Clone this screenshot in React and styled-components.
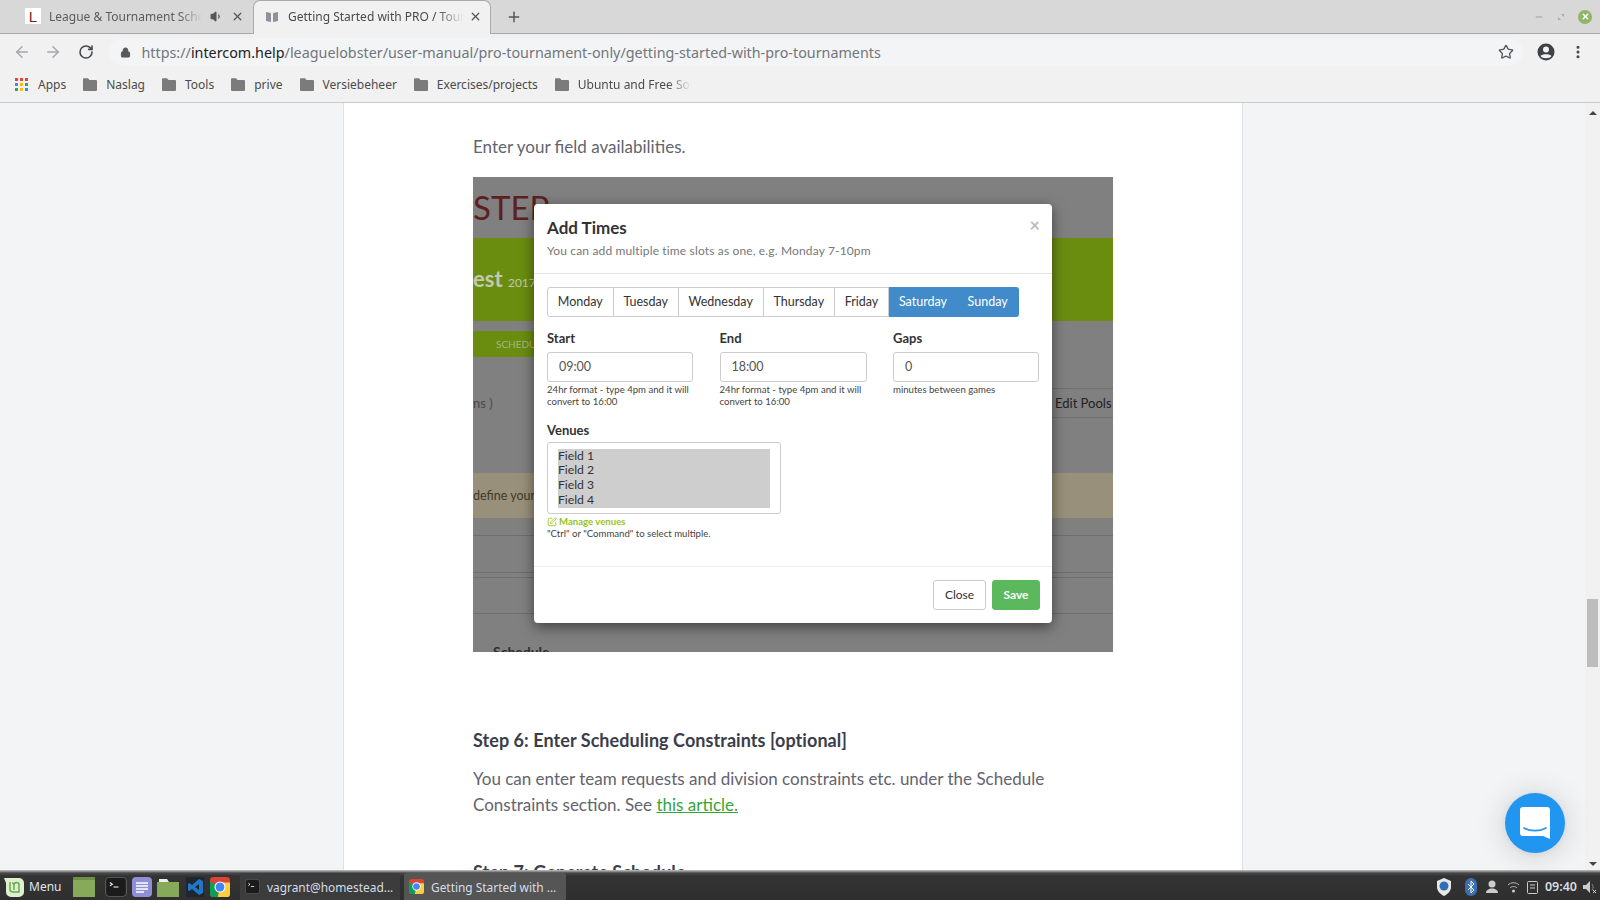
import React from 'react';
import styled, { createGlobalStyle } from 'styled-components';
import { ArrowLeft, ArrowRight, RotateCw, Lock, Star, Plus, X, Volume1, Minus, SquarePen, MoreVertical } from 'lucide-react';

const Global = createGlobalStyle`
  html, body { margin: 0; padding: 0; width: 1600px; height: 900px; overflow: hidden; background: #f3f4f6; }
  * { box-sizing: border-box; }
`;
const Screen = styled.div`display:flex;flex-direction:column;width:1600px;height:900px;overflow:hidden;font-family:"Noto Sans","Open Sans",sans-serif;`;
const TabStrip = styled.div`height:34px;flex:none;background:#d8d8d8;border-bottom:1px solid #a8a8a8;display:flex;align-items:flex-start;position:relative;`;
const Tab = styled.div`width:${p=>p.$w}px;height:34px;flex:none;display:flex;align-items:center;padding:0 0 2px ${p=>p.$pad}px;font-size:12px;color:${p=>p.$active?'#4a4a4a':'#5c5c5c'};
  background:${p=>p.$active?'#f1f1f1':'transparent'};border-radius:${p=>p.$active?'7px 7px 0 0':'0'};
  border:${p=>p.$active?'1px solid #a8a8a8':'none'};border-bottom:none;`;
const TabLabel = styled.span`width:${p=>p.$w}px;overflow:hidden;white-space:nowrap;margin-left:${p=>p.$ml}px;
  -webkit-mask-image:linear-gradient(90deg,#000 85%,transparent);mask-image:linear-gradient(90deg,#000 85%,transparent);`;
const FavL = styled.span`width:16px;height:16px;flex:none;background:#fff;color:#7a1f1f;font:400 15px "Liberation Sans",sans-serif;display:flex;align-items:center;justify-content:center;`;
const NewTab = styled.span`display:flex;margin:9px 0 0 15px;color:#555;`;
const WinControls = styled.div`margin-left:auto;display:flex;align-items:center;gap:13px;height:33px;padding-right:8px;`;
const WinClose = styled.span`width:14px;height:14px;border-radius:50%;background:#8fb56a;display:flex;align-items:center;justify-content:center;color:#fff;`;
const Toolbar = styled.div`height:35px;flex:none;background:#f1f1f1;display:flex;align-items:center;padding:1px 14px 0 13px;color:#5f6368;`;
const NavBtn = styled.span`width:${p=>p.$w||32}px;flex:none;display:flex;align-items:center;color:${p=>p.$dark?'#484b4f':'#a5a7aa'};`;
const Omni = styled.div`flex:1;height:28px;background:#f3f4f6;border-radius:14px;display:flex;align-items:center;padding:0 9px 0 11px;font-size:14.34px;color:#72767b;`;
const Host = styled.span`color:#222;`;
const UrlText = styled.span`margin-left:11px;white-space:nowrap;`;
const OmniStar = styled.span`margin-left:auto;display:flex;color:#55585c;`;
const Account = styled.svg`margin-left:14px;flex:none;`;
const Dots = styled.span`margin-left:15px;display:flex;color:#44474a;`;
const Bookmarks = styled.div`height:34px;flex:none;background:#f1f1f1;border-bottom:1px solid #c9c9c9;display:flex;align-items:center;padding:0 0 3px 15px;font-size:12px;color:#4b4b4b;`;
const Bookmark = styled.span`display:flex;align-items:center;gap:${p=>p.$gap||9}px;margin-right:17px;white-space:nowrap;`;
const Clip = styled.span`width:${p=>p.$w}px;overflow:hidden;-webkit-mask-image:linear-gradient(90deg,#000 80%,transparent);mask-image:linear-gradient(90deg,#000 80%,transparent);`;
const AppsGrid = styled.span`display:grid;grid-template-columns:repeat(3,3px);grid-auto-rows:3px;gap:2px;`;
const AppDot = styled.i`display:block;background:${p=>p.$c};`;
const Viewport = styled.div`flex:1;min-height:0;position:relative;display:flex;background:#f3f4f6;`;
const PageArea = styled.div`flex:1;display:flex;padding-left:343px;overflow:hidden;`;
const Article = styled.article`width:900px;height:1000px;flex:none;background:#fff;border-left:1px solid #dfe1e6;border-right:1px solid #dfe1e6;padding:31px 128px 0 129px;color:#62646f;font-family:"Lato","Noto Sans",sans-serif;`;
const Para = styled.p`margin:0;font-size:17px;line-height:26.5px;`;
const Shot = styled.div`position:relative;width:640px;height:475px;margin-top:16px;background:#808080;overflow:hidden;display:flex;flex-direction:column;font-family:Lato,sans-serif;`;
const ShotTitle = styled.div`height:61px;flex:none;color:#5e1f1f;font-size:33px;padding-top:12px;line-height:36px;`;
const GreenBand = styled.div`height:83px;flex:none;background:#6a8d10;color:#c3c9b0;font-weight:700;font-size:22px;padding-top:26px;line-height:30px;white-space:nowrap;`;
const Small = styled.small`font-size:12px;font-weight:400;`;
const SubTab = styled.div`width:70px;height:26px;flex:none;margin-top:10px;background:#6a8d10;color:#a8b77a;font-size:10px;line-height:26px;padding-left:23px;white-space:nowrap;overflow:hidden;`;
const ToolRow = styled.div`height:30px;flex:none;margin-top:31px;display:flex;justify-content:space-between;align-items:center;color:#3a3a3a;font-size:13px;`;
const Gone = styled.span`color:#4a4a4a;font-size:13px;`;
const EditPools = styled.span`color:#222;border-top:1px solid #6f6f6f;border-bottom:1px solid #6f6f6f;height:30px;line-height:28px;width:61px;padding-left:3px;white-space:nowrap;`;
const Notice = styled.div`height:45px;flex:none;margin-top:55px;background:#98907a;color:#3f3a2c;font-size:12.5px;line-height:45px;`;
const Rule = styled.div`height:1px;flex:none;background:#6e6e6e;margin-top:${p=>p.$mt}px;`;
const CutText = styled.div`flex:none;margin-top:31px;padding-left:20px;font-size:14px;line-height:14px;font-weight:700;color:#2f2f2f;`;
const Modal = styled.div`position:absolute;left:61px;top:27px;width:518px;height:419px;background:#fff;border-radius:4px;box-shadow:0 4px 14px rgba(0,0,0,.5);color:#333;display:flex;flex-direction:column;`;
const ModalHead = styled.header`height:70px;flex:none;border-bottom:1px solid #e5e5e5;padding:13px 12px 0 13px;position:relative;`;
const ModalTitle = styled.h4`margin:0;font-size:17px;line-height:21px;font-weight:700;color:#333;font-family:Lato,sans-serif;`;
const ModalSub = styled.p`margin:5px 0 0;font-size:12px;line-height:16px;color:#777;font-family:Lato,sans-serif;letter-spacing:.15px;`;
const CloseX = styled.span`position:absolute;right:12px;top:11px;color:#bbb;font-size:18px;line-height:20px;font-weight:700;`;
const ModalBody = styled.div`flex:1;padding:13px 12px 0 13px;border-bottom:1px solid #eee;`;
const DayGroup = styled.div`display:inline-flex;height:30px;`;
const Day = styled.span`height:30px;padding:0 9.8px;display:flex;align-items:center;font-size:12.5px;background:${p=>p.$on?'#428bca':'#fff'};color:${p=>p.$on?'#fff':'#333'};
  border:1px solid ${p=>p.$on?'#428bca':'#ccc'};border-left-width:${p=>p.$first?1:0}px;border-radius:${p=>p.$first?'3px 0 0 3px':p.$last?'0 3px 3px 0':'0'};`;
const Fields = styled.div`display:grid;grid-template-columns:146px 147px 146px;column-gap:26.5px;margin-top:13px;`;
const Label = styled.label`display:block;font-size:13px;line-height:16px;font-weight:700;color:#333;`;
const FieldBox = styled.div`height:30px;margin-top:6px;border:1px solid #ccc;border-radius:3px;font-size:12.5px;line-height:28px;padding-left:11px;color:#555;`;
const Help = styled.div`margin-top:${p=>p.$mt??2}px;font-size:9.6px;line-height:12px;color:#444;`;
const VenueBlock = styled.div`margin-top:14px;`;
const VenueBox = styled.div`width:234px;height:72px;margin-top:4px;border:1px solid #ccc;border-radius:3px;padding:6px 10px 5px;`;
const VenueList = styled.div`background:#cecece;height:59px;font-size:12.2px;line-height:14.7px;color:#333;`;
const Manage = styled.div`margin-top:2px;font-size:9.6px;line-height:12px;font-weight:700;color:#97c41e;display:flex;align-items:center;gap:2px;`;
const ModalFoot = styled.footer`height:56px;flex:none;display:flex;justify-content:flex-end;align-items:flex-start;padding:13px 12px 0 0;gap:6px;`;
const Btn = styled.span`height:30px;width:${p=>p.$w}px;border-radius:3px;font-size:12px;display:flex;align-items:center;justify-content:center;background:${p=>p.$save?'#5cb85c':'#fff'};color:${p=>p.$save?'#fff':'#333'};border:1px solid ${p=>p.$save?'#5cb85c':'#ccc'};font-weight:${p=>p.$save?700:400};`;
const Heading = styled.h3`margin:75px 0 0;font-size:18px;line-height:26px;font-weight:700;color:#3b3d4a;letter-spacing:.06px;font-family:Lato,sans-serif;`;
const Para2 = styled(Para)`margin-top:13px;`;
const ArticleLink = styled.a`color:#37a437;text-decoration:underline;`;
const Heading2 = styled(Heading)`margin-top:40px;`;
const ScrollBar = styled.div`width:15px;flex:none;background:#f1f1f1;display:flex;flex-direction:column;align-items:center;position:relative;padding-top:8px;`;
const ArrowUp = styled.i`width:0;height:0;border:4px solid transparent;border-top:0;border-bottom:4px solid #444;`;
const ArrowDown = styled.i`width:0;height:0;border:4px solid transparent;border-bottom:0;border-top:4px solid #444;position:absolute;bottom:4px;`;
const Thumb = styled.div`position:absolute;left:2px;right:2px;top:496px;height:68px;background:#bdbdbd;`;
const Launcher = styled.div`position:absolute;right:35px;bottom:17px;width:60px;height:60px;border-radius:50%;background:#2196f0;box-shadow:0 1px 6px rgba(0,0,0,.06),0 2px 32px rgba(0,0,0,.16);display:flex;align-items:center;justify-content:center;`;
const Taskbar = styled.div`height:30px;flex:none;position:relative;padding-top:3px;background:linear-gradient(#c4c4c4 0,#8a8a8a 1.500px,#484848 3px,#333 6px,#2f2f2f);display:flex;align-items:center;color:#d8d8d8;font-size:12px;`;
const MenuBtn = styled.div`display:flex;align-items:center;gap:5px;padding-left:4px;width:73px;flex:none;color:#dfe6ee;`;
const Launchers = styled.div`display:flex;align-items:center;`;
const LaunchIcon = styled.span`display:flex;margin-left:${p=>p.$ml||0}px;`;
const Gap = styled.span`width:${p=>p.$w}px;flex:none;`;
const WinBtn = styled.div`width:${p=>p.$w}px;height:27px;margin-right:4px;display:flex;align-items:center;gap:7px;padding-left:5px;white-space:nowrap;border-radius:2px 2px 0 0;color:#d6dde6;font-size:11.9px;background:${p=>p.$on?'#555':'#3c3c3c'};`;
const Tray = styled.div`margin-left:auto;display:flex;align-items:center;padding-right:3px;`;
const TrayItem = styled.span`display:flex;align-items:center;margin-left:${p=>p.$ml||0}px;`;
const Clock = styled.span`color:#d8dde2;font-size:12.5px;font-weight:600;`;

const Term = ({w=18,h=18}) => <svg width={w} height={h} viewBox="0 0 18 18" preserveAspectRatio="none"><rect x=".5" y=".5" width="17" height="17" rx="3" fill="#1b1b1b" stroke="#555"/><path d="M4 5l2 1.500L4 8" stroke="#eee" fill="none"/><path d="M7 9h4" stroke="#eee"/></svg>;
const Chrome = ({s=18}) => <svg width={s} height={s} viewBox="0 0 18 18"><rect width="18" height="18" rx="3" fill="#db4437"/><path d="M0 4l9 5-2 9H3a3 3 0 0 1-3-3z" fill="#0f9d58"/><path d="M9 9l-2 9h8a3 3 0 0 0 3-3V5H9z" fill="#ffcd40"/><circle cx="9" cy="9" r="5" fill="#fff"/><circle cx="9" cy="9" r="4" fill="#4285f4"/></svg>;
const BmFolder = () => <svg width="14" height="13" viewBox="0 0 14 13"><path d="M0 1.200A1 1 0 0 1 1 .2h4L6.500 2H13a1 1 0 0 1 1 1v9a1 1 0 0 1-1 1H1a1 1 0 0 1-1-1z" fill="#7b7b7b"/></svg>;

const days = ['Monday','Tuesday','Wednesday','Thursday','Friday'];
const marks = ['Naslag','Tools','prive','Versiebeheer','Exercises/projects'];
const dotColors = ['#ea4335','#ea4335','#ea4335','#4285f4','#fbbc05','#34a853','#34a853','#fbbc05','#4285f4'];

export default function App(){
  return <Screen>
    <Global/>
    <TabStrip>
      <Tab $w={253} $pad={25}>
        <FavL>L</FavL>
        <TabLabel $w={153} $ml={8}>League &amp; Tournament Schedule Maker</TabLabel>
        <Gap $w={8}/><Volume1 size={13} color="#555" fill="#555"/><Gap $w={8}/><X size={13} color="#555" strokeWidth={2.4}/>
      </Tab>
      <Tab $active $w={238} $pad={11}>
        <svg width="14" height="14" viewBox="0 0 14 14"><path d="M1 2l5 1v9l-5-1zM13 2L8 3v9l5-1z" fill="#8b9299"/></svg>
        <TabLabel $w={176} $ml={9}>Getting Started with PRO / Tournaments</TabLabel>
        <Gap $w={5}/><X size={13} color="#555" strokeWidth={2.4}/>
      </Tab>
      <NewTab><Plus size={16} strokeWidth={2.2}/></NewTab>
      <WinControls>
        <Minus size={10} color="#999"/>
        <svg width="8" height="8" viewBox="0 0 8 8"><path d="M4 1h3v3zM1 4v3h3z" fill="#aaa"/></svg>
        <WinClose><X size={9} strokeWidth={4}/></WinClose>
      </WinControls>
    </TabStrip>
    <Toolbar>
      <NavBtn $w={30.5}><ArrowLeft size={18}/></NavBtn>
      <NavBtn $w={34}><ArrowRight size={18}/></NavBtn>
      <NavBtn $w={31} $dark><RotateCw size={16} strokeWidth={2.4}/></NavBtn>
      <Omni>
        <Lock size={11} fill="#55585c" color="#55585c"/>
        <UrlText>https://<Host>intercom.help</Host>/leaguelobster/user-manual/pro-tournament-only/getting-started-with-pro-tournaments</UrlText>
        <OmniStar><Star size={16}/></OmniStar>
      </Omni>
      <Account width="18" height="18" viewBox="0 0 18 18"><circle cx="9" cy="9" r="8.500" fill="#3f4144"/><circle cx="9" cy="6.500" r="3" fill="#f1f1f1"/><path d="M3.500 13c1.500-2.400 9.500-2.400 11 0-2 3-9 3-11 0z" fill="#f1f1f1"/></Account>
      <Dots><MoreVertical size={16} strokeWidth={2.6}/></Dots>
    </Toolbar>
    <Bookmarks>
      <Bookmark $gap={10}>
        <AppsGrid>{dotColors.map((c,i)=><AppDot key={i} $c={c}/>)}</AppsGrid>
        <span>Apps</span>
      </Bookmark>
      {marks.map(m=><Bookmark key={m}><BmFolder/><span>{m}</span></Bookmark>)}
      <Bookmark><BmFolder/><Clip $w={113}>Ubuntu and Free Software</Clip></Bookmark>
    </Bookmarks>
    <Viewport>
      <PageArea>
        <Article>
          <Para>Enter your field availabilities.</Para>
          <Shot>
            <ShotTitle>STEP</ShotTitle>
            <GreenBand>est <Small>2017</Small></GreenBand>
            <SubTab>SCHEDULE</SubTab>
            <ToolRow><Gone>ns )</Gone><EditPools>Edit Pools</EditPools></ToolRow>
            <Notice>define your</Notice>
            <Rule $mt={17}/><Rule $mt={36}/><Rule $mt={4}/><Rule $mt={35}/>
            <CutText>Schedule</CutText>
            <Modal>
              <ModalHead>
                <ModalTitle>Add Times</ModalTitle>
                <ModalSub>You can add multiple time slots as one, e.g. Monday 7-10pm</ModalSub>
                <CloseX>×</CloseX>
              </ModalHead>
              <ModalBody>
                <DayGroup>
                  {days.map((d,i)=><Day key={d} $first={i===0}>{d}</Day>)}
                  <Day $on>Saturday</Day>
                  <Day $on $last>Sunday</Day>
                </DayGroup>
                <Fields>
                  <div><Label>Start</Label><FieldBox>09:00</FieldBox><Help>24hr format - type 4pm and it will convert to 16:00</Help></div>
                  <div><Label>End</Label><FieldBox>18:00</FieldBox><Help>24hr format - type 4pm and it will convert to 16:00</Help></div>
                  <div><Label>Gaps</Label><FieldBox>0</FieldBox><Help>minutes between games</Help></div>
                </Fields>
                <VenueBlock>
                  <Label>Venues</Label>
                  <VenueBox><VenueList>Field 1<br/>Field 2<br/>Field 3<br/>Field 4</VenueList></VenueBox>
                  <Manage><SquarePen size={10}/>Manage venues</Manage>
                  <Help $mt={0}>"Ctrl" or "Command" to select multiple.</Help>
                </VenueBlock>
              </ModalBody>
              <ModalFoot><Btn $w={53}>Close</Btn><Btn $save $w={48}>Save</Btn></ModalFoot>
            </Modal>
          </Shot>
          <Heading>Step 6: Enter Scheduling Constraints [optional]</Heading>
          <Para2>You can enter team requests and division constraints etc. under the Schedule Constraints section. See <ArticleLink>this article.</ArticleLink></Para2>
          <Heading2>Step 7: Generate Schedule</Heading2>
        </Article>
      </PageArea>
      <ScrollBar><ArrowUp/><Thumb/><ArrowDown/></ScrollBar>
      <Launcher>
        <svg width="30" height="32" viewBox="0 0 30 32"><path d="M3 0h24a3 3 0 0 1 3 3v29l-7-3H3a3 3 0 0 1-3-3V3a3 3 0 0 1 3-3z" fill="#fff"/><path d="M4 21c6 3.500 16 3.500 22 0" stroke="#2196f0" strokeWidth="1.600" fill="none" strokeLinecap="round"/></svg>
      </Launcher>
    </Viewport>
    <Taskbar>
      <MenuBtn>
        <svg width="20" height="20" viewBox="0 0 20 20"><path d="M0 1h15a5 5 0 0 1 5 5v9a5 5 0 0 1-5 5H7a5 5 0 0 1-5-5V6z" fill="#dff0cf"/><path d="M6 5v7a3 3 0 0 0 3 3h6V8a2.500 2.500 0 0 0-5 0v5M10 8a2 2 0 0 0-2-2" stroke="#6aa84f" strokeWidth="1.500" fill="none"/></svg>
        <span>Menu</span>
      </MenuBtn>
      <Launchers>
        <LaunchIcon><svg width="22" height="20" viewBox="0 0 22 20"><rect width="22" height="20" fill="#87a95a"/><rect width="22" height="3" fill="#6f8f47"/></svg></LaunchIcon>
        <LaunchIcon $ml={10}><Term w={22} h={20}/></LaunchIcon>
        <LaunchIcon $ml={5}><svg width="20" height="20" viewBox="0 0 20 20"><rect width="20" height="20" rx="4" fill="#8f8fd6"/><path d="M4 6h12M4 9h12M4 12h12M4 15h8" stroke="#fff" strokeWidth="1.300"/></svg></LaunchIcon>
        <LaunchIcon $ml={5}><svg width="22" height="20" viewBox="0 0 22 20"><path d="M2 2h8l2 3H2z" fill="#eee"/><path d="M0 5h22v15H0z" fill="#87a95a"/></svg></LaunchIcon>
        <LaunchIcon $ml={7}><svg width="18" height="20" viewBox="0 0 18 20"><rect width="18" height="20" fill="#1e2730"/><path d="M13 2l4 2v12l-4 2-7-6-3 2-1-1V7l1-1 3 2zM13 7l-4 3 4 3z" fill="#1f77c5"/></svg></LaunchIcon>
        <LaunchIcon $ml={6}><Chrome s={20}/></LaunchIcon>
      </Launchers>
      <Gap $w={10}/>
      <WinBtn $w={160}><Term w={15} h={15}/>vagrant@homestead...</WinBtn>
      <WinBtn $on $w={162}><Chrome s={15}/>Getting Started with ...</WinBtn>
      <Tray>
        <TrayItem><svg width="16" height="18" viewBox="0 0 16 18"><path d="M8 0l7 3v6c0 4-3 7-7 9-4-2-7-5-7-9V3z" fill="#e8e8e8"/><circle cx="8" cy="8" r="4.500" fill="#2f6fb5"/></svg></TrayItem>
        <TrayItem $ml={13}><svg width="12" height="18" viewBox="0 0 12 18"><rect width="12" height="18" rx="6" fill="#3b6fb0"/><path d="M3 6l6 6-3 3V3l3 3-6 6" stroke="#fff" fill="none"/></svg></TrayItem>
        <TrayItem $ml={9}><svg width="12" height="14" viewBox="0 0 12 14"><circle cx="6" cy="4" r="3.500" fill="#ccc"/><path d="M0 13c0-6 12-6 12 0z" fill="#ccc"/></svg></TrayItem>
        <TrayItem $ml={9}><svg width="13" height="12" viewBox="0 0 13 12"><path d="M1 4c3-3 8-3 11 0M3 7c2-2 5-2 7 0" stroke="#bbb" fill="none"/><circle cx="6.500" cy="10" r="1.500" fill="#ccc"/></svg></TrayItem>
        <TrayItem $ml={7}><svg width="11" height="14" viewBox="0 0 11 14"><rect x=".5" y="1.500" width="10" height="12" rx="1" fill="none" stroke="#ccc"/><path d="M3 5h5M3 8h5" stroke="#ccc"/></svg></TrayItem>
        <TrayItem $ml={7}><Clock>09:40</Clock></TrayItem>
        <TrayItem $ml={6}><svg width="14" height="14" viewBox="0 0 14 14"><path d="M0 5h3l4-4v12L3 9H0z" fill="#ccc"/><path d="M9 4c1.500 1.500 1.500 4.500 0 6" stroke="#888" fill="none"/><path d="M10 10l3 3M13 10l-3 3" stroke="#ddd"/></svg></TrayItem>
      </Tray>
    </Taskbar>
  </Screen>;
}
